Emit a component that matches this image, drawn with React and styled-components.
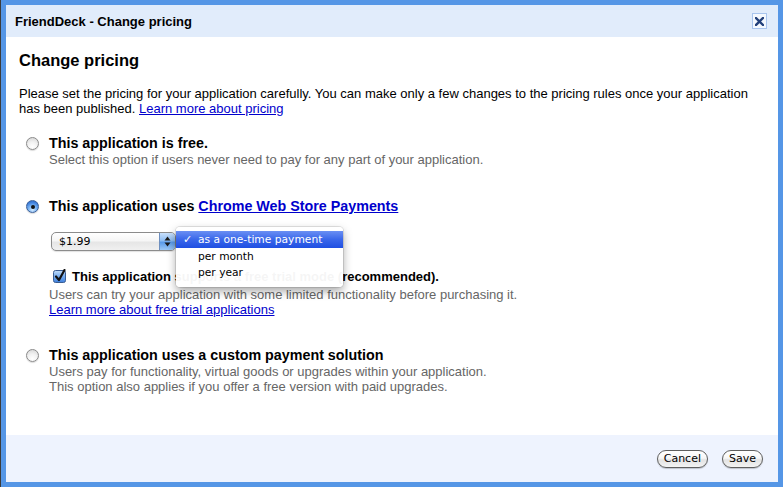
import React from 'react';
import styled, { createGlobalStyle } from 'styled-components';

const GlobalStyle = createGlobalStyle`
  html, body { margin: 0; padding: 0; background: #fff; }
  body { font-family: "Liberation Sans", Arial, sans-serif; color: #000; }
`;

const Frame = styled.div`
  width: 783px;
  height: 487px;
  box-sizing: border-box;
  border-left: 1px solid #3b3b3b;
  background: #5596e6;
  padding: 5px;
  display: flex;
  flex-direction: column;
  overflow: hidden;
`;

const TitleBar = styled.div`
  height: 32px;
  flex: none;
  background: #e1ecfb;
  display: flex;
  align-items: center;
  justify-content: space-between;
  padding: 0 11px 0 9px;
`;

const Title = styled.div`
  font-weight: bold;
  font-size: 13px;
`;

const CloseButton = styled.div`
  width: 15px;
  height: 16px;
  box-sizing: border-box;
  border: 1px solid #a9c5ee;
  background: #f4f8fe;
  display: flex;
  align-items: center;
  justify-content: center;
`;

const Body = styled.div`
  flex: 1;
  background: #fff;
  padding: 0 13px;
  overflow: hidden;
`;

const Heading = styled.h2`
  margin: 12px 0 0;
  font-size: 16.5px;
  line-height: 22px;
  font-weight: bold;
`;

const Intro = styled.p`
  margin: 15px 0 0;
  font-size: 13px;
  line-height: 15px;
`;

const Link = styled.a`
  color: #0000cc;
  text-decoration: underline;
  cursor: pointer;
`;

const Option = styled.div`
  display: grid;
  grid-template-columns: 30px 1fr;
  margin-top: ${(p) => p.$gap}px;
`;

const RadioCell = styled.div`
  padding: 2px 0 0 7px;
`;

const Radio = styled.span`
  display: block;
  position: relative;
  width: 13px;
  height: 13px;
  box-sizing: border-box;
  border-radius: 50%;
  border: 1px solid ${(p) => (p.$checked ? '#3a5f98' : '#8a8a8a')};
  background: ${(p) =>
    p.$checked
      ? 'radial-gradient(circle at 50% 80%, #d6ecff 0%, #78b2f2 40%, #3a7ad8 75%, #2f66bf 100%)'
      : 'radial-gradient(circle at 50% 80%, #ffffff 0%, #f2f2f2 45%, #d2d2d2 100%)'};
  box-shadow: 0 1px 1px rgba(0, 0, 0, 0.15);
  &::after {
    content: '';
    display: ${(p) => (p.$checked ? 'block' : 'none')};
    position: absolute;
    left: 3.5px;
    top: 3.5px;
    width: 4px;
    height: 4px;
    border-radius: 50%;
    background: #111;
  }
`;

const OptionTitle = styled.div`
  font-weight: bold;
  font-size: 14.3px;
  line-height: 17px;
`;

const Desc = styled.div`
  font-size: 13px;
  line-height: 15px;
  color: #666;
  margin-top: ${(p) => p.$gap || 0}px;
`;

const LinkLine = styled.div`
  font-size: 13px;
  line-height: 15px;
`;

const SelectRow = styled.div`
  position: relative;
  margin: 17px 0 0 2px;
  height: 19px;
`;

const Select = styled.div`
  width: 125px;
  height: 19px;
  box-sizing: border-box;
  border: 1px solid #8c8c8c;
  border-radius: 5px;
  background: linear-gradient(#ffffff 0%, #f6f6f6 45%, #e6e6e6 55%, #f0f0f0 100%);
  display: flex;
  overflow: hidden;
  box-shadow: 0 1px 1px rgba(0, 0, 0, 0.12);
`;

const SelectValue = styled.div`
  flex: 1;
  font-family: "DejaVu Sans", sans-serif;
  font-size: 11px;
  line-height: 17px;
  padding-left: 7px;
`;

const SelectArrows = styled.div`
  width: 15px;
  border-left: 1px solid #6e8fbf;
  background: linear-gradient(#c9e0fb 0%, #8dbdf3 45%, #5a9bea 55%, #9cc8f6 100%);
  display: flex;
  align-items: center;
  justify-content: center;
`;

const Menu = styled.div`
  position: absolute;
  left: 125px;
  top: -5px;
  width: 167px;
  box-sizing: border-box;
  padding: 4px 0 7px;
  background: rgba(255, 255, 255, 0.96);
  border-radius: 4px;
  box-shadow: 0 0 0 1px rgba(0, 0, 0, 0.1), 0 4px 10px rgba(0, 0, 0, 0.35);
  font-family: "DejaVu Sans", sans-serif;
  font-size: 10.7px;
  z-index: 5;
`;

const MenuItem = styled.div`
  display: flex;
  align-items: center;
  height: ${(p) => (p.$active ? 17 : 16)}px;
  padding-left: 7px;
  color: ${(p) => (p.$active ? '#fff' : '#000')};
  background: ${(p) => (p.$active ? 'linear-gradient(#6a8ff3 0%, #3a67ea 50%, #1f4fe2 100%)' : 'transparent')};
`;

const Check = styled.span`
  width: 15px;
  font-size: 11px;
  font-weight: bold;
`;

const CheckRow = styled.div`
  margin-top: 17px;
  display: flex;
  align-items: center;
  height: 17px;
`;

const CheckBox = styled.span`
  display: block;
  margin: -2px 5px 0 4px;
  width: 14px;
  height: 14px;
`;

const CheckLabel = styled.span`
  font-weight: bold;
  font-size: 13px;
  line-height: 17px;
`;

const Footer = styled.div`
  height: 47px;
  flex: none;
  box-sizing: border-box;
  background: #eef3fe;
  display: flex;
  justify-content: flex-end;
  align-items: flex-start;
  gap: 14px;
  padding: 15px 15px 0 0;
`;

const Button = styled.button`
  height: 18px;
  box-sizing: border-box;
  padding: 0 6px;
  border: 1px solid #5f5f5f;
  border-radius: 9px;
  background: linear-gradient(#ffffff 0%, #f7f7f7 45%, #e3e3e3 55%, #f3f3f3 100%);
  box-shadow: 0 1px 1px rgba(0, 0, 0, 0.2);
  font-family: "DejaVu Sans", sans-serif;
  font-size: 11px;
  line-height: 16px;
  color: #000;
  cursor: pointer;
`;

const CloseIcon = () => (
  <svg width="9" height="9" viewBox="0 0 9 9">
    <path d="M1 1 L8 8 M8 1 L1 8" stroke="#23407a" strokeWidth="2.4" strokeLinecap="square" />
  </svg>
);

const ArrowsIcon = () => (
  <svg width="7" height="11" viewBox="0 0 7 11">
    <path d="M3.5 0.5 L6.5 4.5 L0.5 4.5 Z" fill="#1c1c1c" />
    <path d="M3.5 10.5 L6.5 6.5 L0.5 6.5 Z" fill="#1c1c1c" />
  </svg>
);

const CheckIcon = () => (
  <svg width="14" height="14" viewBox="0 0 14 14">
    <defs>
      <linearGradient id="cbg" x1="0" y1="0" x2="0" y2="1">
        <stop offset="0" stopColor="#c4def9" />
        <stop offset="0.5" stopColor="#75acef" />
        <stop offset="1" stopColor="#3e7fdc" />
      </linearGradient>
    </defs>
    <rect x="0.5" y="1.5" width="12" height="12" rx="2" fill="url(#cbg)" stroke="#3a5d92" />
    <path d="M3 7.5 L6 11 L11.5 1" stroke="#111" strokeWidth="2.2" fill="none" strokeLinecap="round" strokeLinejoin="round" />
  </svg>
);

export default function App() {
  return (
    <>
      <GlobalStyle />
      <Frame>
        <TitleBar>
          <Title>FriendDeck - Change pricing</Title>
          <CloseButton>
            <CloseIcon />
          </CloseButton>
        </TitleBar>
        <Body>
          <Heading>Change pricing</Heading>
          <Intro>
            Please set the pricing for your application carefully. You can make only a few changes to the pricing rules once your application has been published.{' '}
            <Link>Learn more about pricing</Link>
          </Intro>

          <Option $gap={19}>
            <RadioCell>
              <Radio />
            </RadioCell>
            <div>
              <OptionTitle>This application is free.</OptionTitle>
              <Desc>Select this option if users never need to pay for any part of your application.</Desc>
            </div>
          </Option>

          <Option $gap={31}>
            <RadioCell>
              <Radio $checked />
            </RadioCell>
            <div>
              <OptionTitle>
                This application uses <Link>Chrome Web Store Payments</Link>
              </OptionTitle>
              <SelectRow>
                <Select>
                  <SelectValue>$1.99</SelectValue>
                  <SelectArrows>
                    <ArrowsIcon />
                  </SelectArrows>
                </Select>
                <Menu>
                  <MenuItem $active>
                    <Check>✓</Check>
                    <span>as a one-time payment</span>
                  </MenuItem>
                  <MenuItem>
                    <Check />
                    <span>per month</span>
                  </MenuItem>
                  <MenuItem>
                    <Check />
                    <span>per year</span>
                  </MenuItem>
                </Menu>
              </SelectRow>
              <CheckRow>
                <CheckBox>
                  <CheckIcon />
                </CheckBox>
                <CheckLabel>This application supports a free trial mode (recommended).</CheckLabel>
              </CheckRow>
              <Desc $gap={2}>Users can try your application with some limited functionality before purchasing it.</Desc>
              <LinkLine>
                <Link>Learn more about free trial applications</Link>
              </LinkLine>
            </div>
          </Option>

          <Option $gap={30}>
            <RadioCell>
              <Radio />
            </RadioCell>
            <div>
              <OptionTitle>This application uses a custom payment solution</OptionTitle>
              <Desc>Users pay for functionality, virtual goods or upgrades within your application.</Desc>
              <Desc>This option also applies if you offer a free version with paid upgrades.</Desc>
            </div>
          </Option>
        </Body>
        <Footer>
          <Button>Cancel</Button>
          <Button>Save</Button>
        </Footer>
      </Frame>
    </>
  );
}
